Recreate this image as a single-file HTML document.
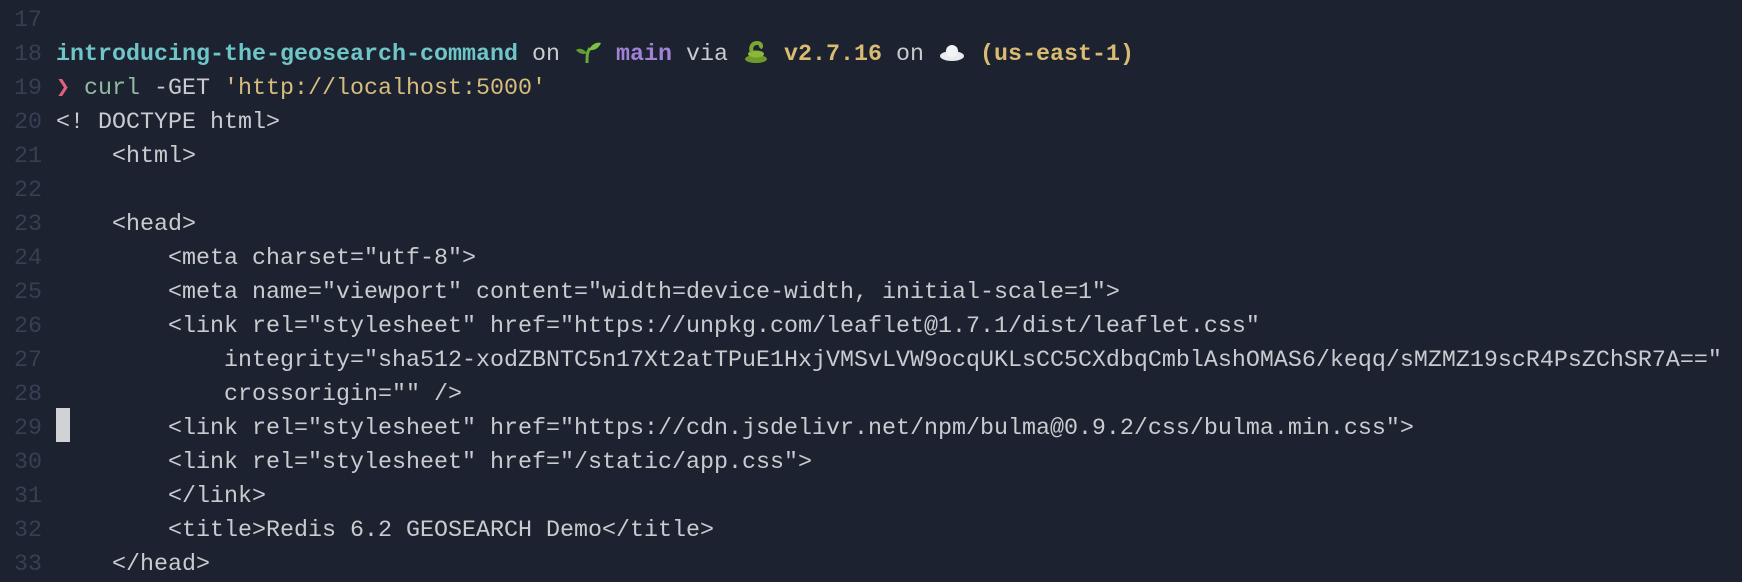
<!DOCTYPE html>
<html><head><meta charset="utf-8"><style>
html,body{margin:0;padding:0;background:#1c2230;width:1742px;height:582px;overflow:hidden}
pre{margin:0;position:absolute;left:0;top:4px;font-family:"Liberation Mono",monospace;font-size:23.33px;line-height:34px;color:#c9cbcf;white-space:pre}
.n{color:#373f53}
.t{color:#6fc6c8;font-weight:bold}
.p{color:#a182d6;font-weight:bold}
.y{color:#d9bc72;font-weight:bold}
.s{color:#d6bd7d}
.g{color:#93bba4}
.r{color:#e0607e}
.e{display:inline-block;width:28px;height:24px;vertical-align:-4px}
#cur{position:absolute;left:56px;top:408px;width:14px;height:34px;background:#d0d2d6}
</style></head><body>
<pre><span class="n"> 17</span>
<span class="n"> 18</span> <span class="t">introducing-the-geosearch-command</span> on <svg class="e" viewBox="0 0 28 24"><path d="M13 23 C13 16 13 12 16 8" stroke="#6aa83a" stroke-width="3" fill="none"/><path d="M15 10 C18 3 24 2 27 3 C25 8 20 11 15 10Z" fill="#7cc242"/><path d="M13 13 C9 8 4 8 2 10 C5 14 10 15 13 13Z" fill="#5e9e30"/></svg> <span class="p">main</span> via <svg class="e" viewBox="0 0 28 24"><ellipse cx="14" cy="19" rx="11" ry="4" fill="#6e9a2c"/><ellipse cx="14" cy="14" rx="8" ry="3.5" fill="#8bb83a"/><path d="M10 12 C8 8 10 3 15 3 C19 3 20 6 18 8" stroke="#7aa833" stroke-width="4" fill="none"/></svg> <span class="y">v2.7.16</span> on <svg class="e" viewBox="0 0 28 24"><ellipse cx="14" cy="16" rx="12" ry="5" fill="#e8eaee"/><circle cx="14" cy="11" r="6" fill="#f2f3f5"/></svg> <span class="y">(us-east-1)</span>
<span class="n"> 19</span> <span class="r">❯</span> <span class="g">curl</span> -GET <span class="s">'http://localhost:5000'</span>
<span class="n"> 20</span> &lt;! DOCTYPE html&gt;
<span class="n"> 21</span>     &lt;html&gt;
<span class="n"> 22</span>
<span class="n"> 23</span>     &lt;head&gt;
<span class="n"> 24</span>         &lt;meta charset="utf-8"&gt;
<span class="n"> 25</span>         &lt;meta name="viewport" content="width=device-width, initial-scale=1"&gt;
<span class="n"> 26</span>         &lt;link rel="stylesheet" href="https://unpkg.com/leaflet@1.7.1/dist/leaflet.css"
<span class="n"> 27</span>             integrity="sha512-xodZBNTC5n17Xt2atTPuE1HxjVMSvLVW9ocqUKLsCC5CXdbqCmblAshOMAS6/keqq/sMZMZ19scR4PsZChSR7A=="
<span class="n"> 28</span>             crossorigin="" /&gt;
<span class="n"> 29</span>         &lt;link rel="stylesheet" href="https://cdn.jsdelivr.net/npm/bulma@0.9.2/css/bulma.min.css"&gt;
<span class="n"> 30</span>         &lt;link rel="stylesheet" href="/static/app.css"&gt;
<span class="n"> 31</span>         &lt;/link&gt;
<span class="n"> 32</span>         &lt;title&gt;Redis 6.2 GEOSEARCH Demo&lt;/title&gt;
<span class="n"> 33</span>     &lt;/head&gt;</pre>
<div id="cur"></div>
</body></html>
